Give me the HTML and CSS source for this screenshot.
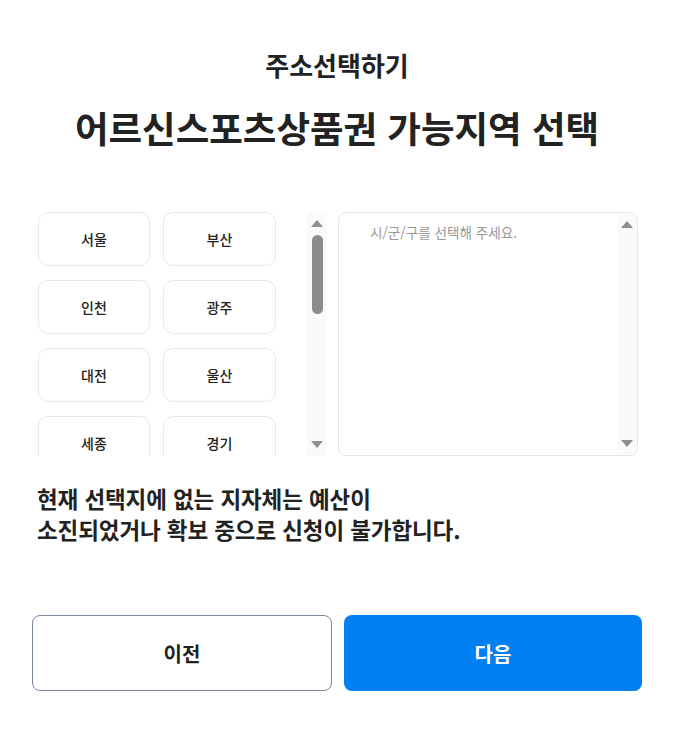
FILE: index.html
```html
<!DOCTYPE html>
<html lang="ko">
<head>
    <meta charset="UTF-8">
    <title>주소선택하기</title>
    <link rel="stylesheet" href="styles.css">
</head>
<body>
    <div class="wrap">
        <h2 class="step-title">주소선택하기</h2>
        <h1 class="page-title">어르신스포츠상품권 가능지역 선택</h1>

        <div class="selector">
            <div class="sido-panel">
                <div class="sido-list">
                    <div class="sido-grid">
                        <button class="sido-button">서울</button>
                        <button class="sido-button">부산</button>
                        <button class="sido-button">인천</button>
                        <button class="sido-button">광주</button>
                        <button class="sido-button">대전</button>
                        <button class="sido-button">울산</button>
                        <button class="sido-button">세종</button>
                        <button class="sido-button">경기</button>
                    </div>
                </div>
                <div class="scrollbar">
                    <span class="arrow-up"></span>
                    <span class="thumb"></span>
                    <span class="arrow-down"></span>
                </div>
            </div>
            <div class="sigungu-panel">
                <div class="sigungu-list">
                    <p class="placeholder">시/군/구를 선택해 주세요.</p>
                </div>
                <div class="scrollbar">
                    <span class="arrow-up"></span>
                    <span class="arrow-down"></span>
                </div>
            </div>
        </div>

        <p class="notice">현재 선택지에 없는 지자체는 예산이<br>소진되었거나 확보 중으로 신청이 불가합니다.</p>

        <div class="actions">
            <button class="btn btn-prev">이전</button>
            <button class="btn btn-next">다음</button>
        </div>
    </div>
</body>
</html>
```

FILE: styles.css
```css
body {
    margin: 0;
    background: #fff;
    color: #222;
    font-family: "Noto Sans CJK KR", "Noto Sans", sans-serif;
}
.wrap {
    padding: 47px 37px 0 32px;
}
.step-title {
    margin: 0;
    font-size: 26px;
    line-height: 36px;
    font-weight: 700;
    text-align: center;
}
.page-title {
    margin: 20px 0 0;
    font-size: 36.5px;
    line-height: 50px;
    font-weight: 700;
    text-align: center;
}
.selector {
    display: flex;
    gap: 11px;
    height: 244px;
    margin: 59px 0 0 6px;
}
.sido-panel {
    display: flex;
    width: 289px;
}
.sido-list {
    flex: 1;
    overflow: hidden;
}
.sido-grid {
    display: grid;
    grid-template-columns: 112px 113px;
    grid-auto-rows: 54px;
    gap: 14px 13px;
}
.sido-button {
    background: #fff;
    border: 1px solid #e9e9e9;
    border-radius: 10px;
    font-family: inherit;
    font-size: 14px;
    font-weight: 500;
    color: #222;
    cursor: pointer;
}
.sigungu-panel {
    display: flex;
    width: 300px;
    box-sizing: border-box;
    border: 1px solid #e6e6e6;
    border-radius: 8px;
    overflow: hidden;
}
.sigungu-list {
    flex: 1;
}
.placeholder {
    margin: 0;
    padding: 9px 0 0 31px;
    font-size: 13.6px;
    line-height: 20px;
    color: #999;
}

/* fake scrollbar, same look on both panels */
.scrollbar {
    width: 20px;
    flex-shrink: 0;
    display: flex;
    flex-direction: column;
    align-items: center;
    padding: 8px 0;
    box-sizing: border-box;
    background: #fafafa;
}
.arrow-up {
    border-left: 6px solid transparent;
    border-right: 6px solid transparent;
    border-bottom: 7px solid #8f8f8f;
}
.arrow-down {
    margin-top: auto;
    border-left: 6px solid transparent;
    border-right: 6px solid transparent;
    border-top: 7px solid #8f8f8f;
}
.thumb {
    width: 11px;
    height: 79px;
    margin-top: 8px;
    border-radius: 6px;
    background: #8c8c8c;
}

.notice {
    margin: 27px 0 0 5px;
    font-size: 22.5px;
    line-height: 31px;
    font-weight: 600;
    letter-spacing: -0.1px;
}
.actions {
    display: flex;
    gap: 12px;
    margin-top: 70px;
}
.btn {
    flex: 1;
    height: 76px;
    border-radius: 8px;
    font-family: inherit;
    font-size: 20px;
    font-weight: 700;
    cursor: pointer;
}
.btn-prev {
    background: #fff;
    border: 1px solid #7b86a3;
    color: #222;
}
.btn-next {
    background: #0080f3;
    border: none;
    color: #fff;
}
```
